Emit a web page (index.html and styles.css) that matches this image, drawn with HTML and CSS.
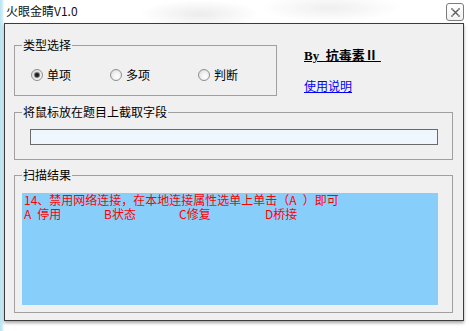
FILE: index.html
```html
<!DOCTYPE html>
<html lang="zh-CN">
<head>
<meta charset="utf-8">
<title>火眼金睛V1.0</title>
<link rel="stylesheet" href="styles.css">
</head>
<body>
<div class="window">
  <div class="titlebar">
    <span class="title">火眼金睛V1.0</span>
    <button class="close" aria-label="关闭">
      <svg width="9" height="9" viewBox="0 0 9 9">
        <path d="M1.5 1.5 L7.5 7.5 M7.5 1.5 L1.5 7.5" stroke="#5b5b5b" stroke-width="1.4" fill="none"/>
        <rect x="0" y="0" width="2" height="2" fill="#9a9a9a"/>
        <rect x="7" y="0" width="2" height="2" fill="#9a9a9a"/>
        <rect x="0" y="7" width="2" height="2" fill="#9a9a9a"/>
        <rect x="7" y="7" width="2" height="2" fill="#9a9a9a"/>
      </svg>
    </button>
  </div>
  <div class="client">
    <div class="top-row">
      <fieldset class="group group-type">
        <legend>类型选择</legend>
        <div class="radios">
          <label class="radio radio-1"><span class="circle checked"></span>单项</label>
          <label class="radio radio-2"><span class="circle"></span>多项</label>
          <label class="radio radio-3"><span class="circle"></span>判断</label>
        </div>
      </fieldset>
      <div class="about">
        <div class="author">By  抗毒素Ⅱ </div>
        <a class="help" href="#">使用说明</a>
      </div>
    </div>
    <fieldset class="group group-capture">
      <legend>将鼠标放在题目上截取字段</legend>
      <div class="capture-box"></div>
    </fieldset>
    <fieldset class="group group-result">
      <legend>扫描结果</legend>
      <div class="result">
        <div class="q">14、禁用网络连接，在本地连接属性选单上单击（A<span class="sp"></span>）即可</div>
        <div class="opts"><span class="opt opt-a">A<span class="sp"></span>停用</span><span class="opt opt-b">B状态</span><span class="opt opt-c">C修复</span><span class="opt">D桥接</span></div>
      </div>
    </fieldset>
  </div>
</div>
</body>
</html>
```

FILE: styles.css
```css
* { box-sizing: border-box; }
html, body { margin: 0; padding: 0; background: #ffffff; }
body {
  font-family: "Noto Sans CJK SC", "DejaVu Sans", sans-serif;
  font-size: 12px;
  color: #000;
}
.window {
  width: 469px;
  height: 331px;
  background:
    linear-gradient(to right, #b8e4f4 0, #d6f0fa 3px, rgba(255,255,255,0) 4px),
    radial-gradient(ellipse 60px 14px at 200px 14px, #ececec, rgba(255,255,255,0)),
    radial-gradient(ellipse 70px 14px at 330px 8px, #efefef, rgba(255,255,255,0)),
    #ffffff;
  display: flex;
  flex-direction: column;
}
.titlebar {
  height: 23px;
  display: flex;
  align-items: flex-start;
  justify-content: space-between;
  padding: 2px 5px 0 6px;
}
.title {
  font-size: 12px;
  line-height: 16px;
  margin-top: 1px;
  color: #111;
  text-shadow: 0 0 6px #fff, 0 0 3px #fff;
}
.close {
  width: 18px;
  height: 18px;
  margin-top: 1px;
  padding: 0;
  border: 1px solid #7c7c7c;
  border-radius: 3px;
  background: linear-gradient(#ffffff, #f2f2f2);
  display: flex;
  align-items: center;
  justify-content: center;
}
.close svg { display: block; }
.client {
  margin-left: 4px;
  width: 460px;
  height: 298px;
  border: 1px solid #3c3c3c;
  background: #f0f0f0;
  padding: 13px 10px 0 9px;
  box-shadow: 0 2px 3px rgba(0,0,0,0.35);
  display: flex;
  flex-direction: column;
}
.group {
  margin: 0;
  padding: 0 14px 0 7px;
  border: 1px solid #a0a0a0;
  min-width: 0;
}
.group legend {
  padding: 0 1px;
  font-size: 12px;
  line-height: 16px;
  color: #000;
}
.top-row { display: flex; }
.group-type { width: 263px; height: 59px; }
.radios {
  display: flex;
  margin-top: 14px;
  margin-left: 9px;
  line-height: 16px;
}
.radio {
  display: flex;
  align-items: center;
  gap: 4px;
}
.radio-1 { width: 79px; }
.radio-2 { width: 88px; }
.circle {
  width: 12px;
  height: 12px;
  border-radius: 50%;
  border: 1px solid #8e8f8f;
  background: radial-gradient(circle at 60% 65%, #ffffff 0, #f2f2f2 40%, #d5d5d5 100%);
  display: flex;
  align-items: center;
  justify-content: center;
}
.circle.checked::after {
  content: "";
  width: 4px;
  height: 4px;
  border-radius: 50%;
  background: #1e1e1e;
  box-shadow: 0 0 1px 1px #6b6b6b;
}
.about {
  margin-left: 27px;
  margin-top: 12px;
  display: flex;
  flex-direction: column;
  align-items: flex-start;
}
.author {
  font-family: "Liberation Serif", "Noto Sans CJK SC", serif;
  font-weight: bold;
  font-size: 13px;
  line-height: 14px;
  text-decoration: underline;
  white-space: pre;
}
.help {
  margin-top: 16px;
  font-size: 12px;
  line-height: 14px;
  color: #0000ff;
  text-decoration: underline;
}
.group-capture { margin-top: 8px; height: 56px; }
.capture-box {
  margin: 9px 0 0 8px;
  height: 16px;
  border: 1px solid #6a6a6a;
  background: #eff6fd;
}
.group-result { margin-top: 7px; height: 146px; }
.result {
  margin-top: 10px;
  height: 112px;
  background: #87cefa;
  color: #ff0000;
  font-size: 12px;
  line-height: 14px;
  padding: 0 2px;
}
.sp { display: inline-block; width: 6px; }
.opts { display: flex; white-space: pre; }
.opt-a { width: 80px; }
.opt-b { width: 75px; }
.opt-c { width: 86px; }
```
